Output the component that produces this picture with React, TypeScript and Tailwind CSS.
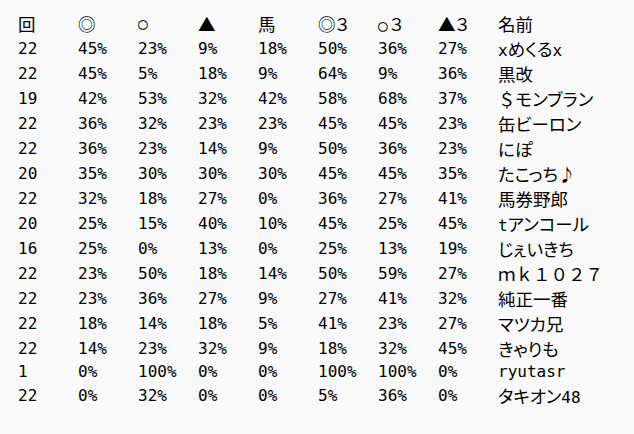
import React from "react";

const J = ({ children, p = true }: { children: React.ReactNode; p?: boolean }) => (
  <span
    className={
      p
        ? "font-['Noto_Sans_CJK_JP'] text-[17.5px] [font-feature-settings:'palt']"
        : "font-['Noto_Sans_CJK_JP'] text-[17.5px]"
    }
  >
    {children}
  </span>
);

type Row = { v: string[]; name: React.ReactNode; short?: boolean };

const rows: Row[] = [
  { v: ["22", "45%", "23%", "9%", "18%", "50%", "36%", "27%"], name: <>x<J>めくる</J>x</> },
  { v: ["22", "45%", "5%", "18%", "9%", "64%", "9%", "36%"], name: <J>黒改</J> },
  { v: ["19", "42%", "53%", "32%", "42%", "58%", "68%", "37%"], name: <><J p={false}>＄</J><J>モンブラン</J></> },
  { v: ["22", "36%", "32%", "23%", "23%", "45%", "45%", "23%"], name: <J>缶ビーロン</J> },
  { v: ["22", "36%", "23%", "14%", "9%", "50%", "36%", "23%"], name: <J>にぽ</J> },
  { v: ["20", "35%", "30%", "30%", "30%", "45%", "45%", "35%"], name: <J>たこっち♪</J> },
  { v: ["22", "32%", "18%", "27%", "0%", "36%", "27%", "41%"], name: <J>馬券野郎</J> },
  { v: ["20", "25%", "15%", "40%", "10%", "45%", "25%", "45%"], name: <>t<J>アンコール</J></> },
  { v: ["16", "25%", "0%", "13%", "0%", "25%", "13%", "19%"], name: <J>じぇいきち</J> },
  { v: ["22", "23%", "50%", "18%", "14%", "50%", "59%", "27%"], name: <J p={false}>ｍｋ１０２７</J> },
  { v: ["22", "23%", "36%", "27%", "9%", "27%", "41%", "32%"], name: <J>純正一番</J> },
  { v: ["22", "18%", "14%", "18%", "5%", "41%", "23%", "27%"], name: <J>マツカ兄</J> },
  { v: ["22", "14%", "23%", "32%", "9%", "18%", "32%", "45%"], name: <J>きゃりも</J> },
  { v: ["1", "0%", "100%", "0%", "0%", "100%", "100%", "0%"], name: "ryutasr", short: true },
  { v: ["22", "0%", "32%", "0%", "0%", "5%", "36%", "0%"], name: <><J>タキオン</J>48</> },
];

const header: React.ReactNode[] = [
  <J>回</J>,
  <J>◎</J>,
  <span>○</span>,
  <J>▲</J>,
  <J>馬</J>,
  <><J>◎</J><J>３</J></>,
  <><span className="mr-[2px]">○</span><J>３</J></>,
  <><J>▲</J><J>３</J></>,
  <J>名前</J>,
];

function Line({ cells, short }: { cells: React.ReactNode[]; short?: boolean }) {
  return (
    <div className={short ? "flex h-[22px] leading-[22px]" : "flex h-[25px] leading-[25px]"}>
      {cells.map((c, i) => (
        <div key={i} className={i < 8 ? "w-[60px] shrink-0 whitespace-nowrap" : "whitespace-nowrap"}>
          {c}
        </div>
      ))}
    </div>
  );
}

export default function App() {
  return (
    <div className="w-[634px] h-[434px] bg-[#f9f9f9] text-black font-['DejaVu_Sans_Mono','Noto_Sans_CJK_JP',monospace] text-[16px] pt-[11px] pl-[18px]">
      <Line cells={header} />
      {rows.map((r, i) => (
        <Line key={i} cells={[...r.v, r.name]} short={r.short} />
      ))}
    </div>
  );
}
